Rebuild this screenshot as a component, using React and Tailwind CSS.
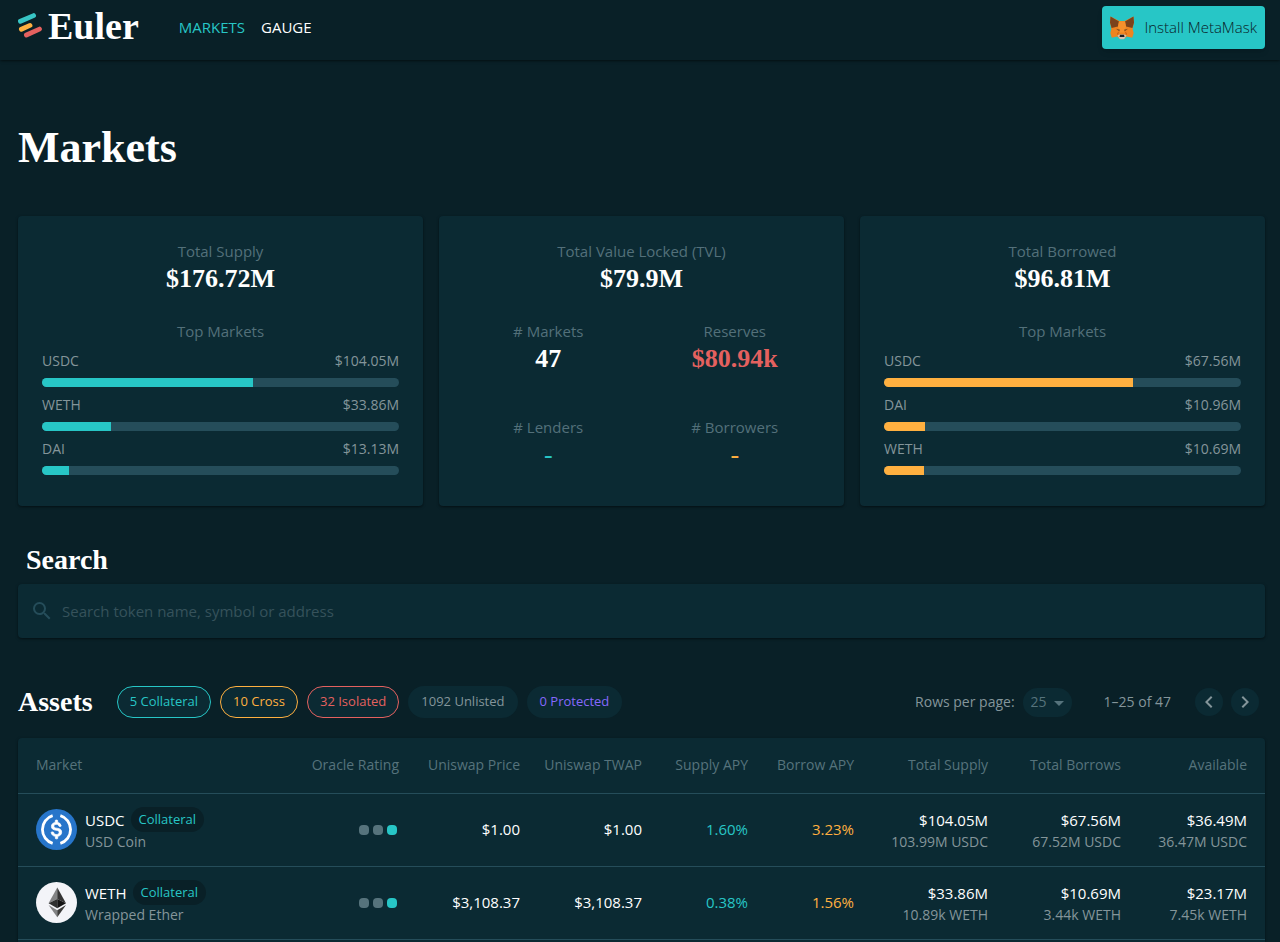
import React, { useState } from 'react';
import { MdSearch, MdArrowDropDown, MdChevronLeft, MdChevronRight } from 'react-icons/md';

const supplyMarkets = [
  { symbol: 'USDC', value: '$104.05M', percent: 59 },
  { symbol: 'WETH', value: '$33.86M', percent: 19.2 },
  { symbol: 'DAI', value: '$13.13M', percent: 7.5 }
];

const borrowMarkets = [
  { symbol: 'USDC', value: '$67.56M', percent: 69.8 },
  { symbol: 'DAI', value: '$10.96M', percent: 11.4 },
  { symbol: 'WETH', value: '$10.69M', percent: 11.1 }
];

const filters = [
  { label: '5 Collateral', style: 'text-[#27c6c6] border-[#27c6c6]' },
  { label: '10 Cross', style: 'text-[#ffb040] border-[#ffb040]' },
  { label: '32 Isolated', style: 'text-[#e4615f] border-[#e4615f]' },
  { label: '1092 Unlisted', style: 'text-[#84959a] border-transparent' },
  { label: '0 Protected', style: 'text-[#8668fc] border-transparent' }
];

const assets = [
  {
    symbol: 'USDC',
    name: 'USD Coin',
    price: '$1.00',
    twap: '$1.00',
    supplyApy: '1.60%',
    borrowApy: '3.23%',
    supply: ['$104.05M', '103.99M USDC'],
    borrows: ['$67.56M', '67.52M USDC'],
    available: ['$36.49M', '36.47M USDC']
  },
  {
    symbol: 'WETH',
    name: 'Wrapped Ether',
    price: '$3,108.37',
    twap: '$3,108.37',
    supplyApy: '0.38%',
    borrowApy: '1.56%',
    supply: ['$33.86M', '10.89k WETH'],
    borrows: ['$10.69M', '3.44k WETH'],
    available: ['$23.17M', '7.45k WETH']
  }
];

const Logo = () => (
  <svg viewBox="0 0 24 26" className="w-6 h-[26px]" fill="none" strokeLinecap="round" strokeWidth="4.8" aria-hidden="true">
    <path d="M2.4 8.2 15.6 2.6" stroke="#38c5c5" />
    <path d="M3.4 16.3 12 12.4" stroke="#ffb040" />
    <path d="M8.4 22 21.5 16.1" stroke="#e4615f" />
  </svg>
);

const Fox = () => (
  <svg viewBox="0 0 24 24" className="w-6 h-6" aria-hidden="true">
    <path d="M.5.5 9.5 5h5L23.5.5l.5 6-1.400 6.500 1.100 4-1.500 4.800-5.400-1.300L14 23h-4l-2.800-2.500-5.400 1.300L.3 17l1.100-4L0 6.500z" fill="#ee8420" />
    <path d="M.5.5 9 5.500 8 10.500 1.600 12 0 6.500zM23.500.5 15 5.500l1 5 6.400 1.500L24 6.500z" fill="#7b431c" />
    <path d="M9 5.500h6l1 5-1.800 6h-4.400l-1.800-6z" fill="#f6912c" />
    <path d="M6 12.800l4 1-.8 1.500zM18 12.800l-4 1 .8 1.500z" fill="#7a4a22" />
    <path d="M9.400 15.300l-2.400 2 .6 2.200zM14.600 15.300l2.400 2-.6 2.200z" fill="#cd6116" />
    <path d="M7.500 19.300l2.300-.8h4.400l2.300.8-1.900 3.200-.9.700h-3.400l-.9-.7z" fill="#d3c2b3" />
    <path d="M10 18.700h4l.5 2.300h-5z" fill="#1d2024" />
  </svg>
);

const UsdcIcon = () => (
  <svg viewBox="0 0 32 32" className="w-[41px] h-[41px] shrink-0" aria-hidden="true">
    <circle cx="16" cy="16" r="16" fill="#2775ca" />
    <path d="M20.022 18.124c0-2.124-1.280-2.852-3.840-3.156-1.828-.243-2.193-.728-2.193-1.578 0-.850.610-1.396 1.828-1.396 1.097 0 1.707.364 2.011 1.275a.458.458 0 00.427.303h.975a.416.416 0 00.427-.425v-.060a3.040 3.040 0 00-2.743-2.489V9.142c0-.243-.183-.425-.487-.486h-.915c-.243 0-.426.182-.487.486v1.396c-1.829.242-2.986 1.456-2.986 2.974 0 2.002 1.218 2.791 3.778 3.095 1.707.303 2.255.668 2.255 1.639 0 .970-.853 1.638-2.011 1.638-1.585 0-2.133-.667-2.316-1.578-.060-.242-.244-.364-.427-.364h-1.036a.416.416 0 00-.426.425v.060c.243 1.518 1.219 2.610 3.230 2.914v1.457c0 .242.183.425.487.485h.915c.243 0 .426-.182.487-.485V21.340c1.829-.303 3.047-1.578 3.047-3.217z" fill="#fff" stroke="#fff" strokeWidth=".6" />
    <path d="M13 5.200a11.300 11.300 0 0 0 0 21.600M19 5.200a11.300 11.300 0 0 1 0 21.600" fill="none" stroke="#fff" strokeWidth="2.200" />
  </svg>
);

const WethIcon = () => (
  <svg viewBox="0 0 32 32" className="w-[41px] h-[41px] shrink-0" aria-hidden="true">
    <circle cx="16" cy="16" r="16" fill="#f3f4f8" />
    <path d="M16.600 4.300v9l-6.800 3.200z" fill="#828384" />
    <path d="M16.600 4.300v9l6.800 3.200z" fill="#343434" />
    <path d="M9.800 16.500l6.800-3.200v7.200z" fill="#2f3030" />
    <path d="M16.600 13.300l6.800 3.200-6.800 4z" fill="#131313" />
    <path d="M9.800 18l6.800 4v5.600z" fill="#828384" />
    <path d="M23.400 18l-6.800 4v5.600z" fill="#3c3c3b" />
  </svg>
);

const Stat = ({ label, value, valueStyle = 'font-bold text-white' }) => (
  <div className="text-center">
    <p className="text-[15px] leading-6 text-[#53707a]">{label}</p>
    <p className={`font-['Liberation_Serif',serif] text-[26px] leading-8 ${valueStyle}`}>{value}</p>
  </div>
);

const MarketBars = ({ title, label, value, markets, fill }) => (
  <section className="bg-[#0b2a33] rounded shadow-sm shadow-black/40 px-6 pt-[23px] pb-[23px]">
    <Stat label={label} value={value} />
    <p className="mt-6 text-center text-[15px] leading-6 text-[#53707a]">{title}</p>
    <ul className="mt-2">
      {markets.map((market) => (
        <li key={market.symbol} className="h-11">
          <div className="flex justify-between text-sm leading-5 text-[#84959a]">
            <span>{market.symbol}</span>
            <span>{market.value}</span>
          </div>
          <div className="mt-[7px] h-[9px] rounded-full bg-[#254d5a] overflow-hidden">
            <div className={`h-full ${fill}`} style={{ width: `${market.percent}%` }} />
          </div>
        </li>
      ))}
    </ul>
  </section>
);

const Amount = ({ amount }) => (
  <>
    <div className="text-[15px] leading-6 font-medium text-white">{amount[0]}</div>
    <div className="text-sm leading-5 text-[#84959a]">{amount[1]}</div>
  </>
);

const AssetRow = ({ asset }) => (
  <tr className="h-[73px] border-t border-[#254d5a]">
    <td className="pl-[18px] text-left">
      <div className="flex items-center gap-2">
        {asset.symbol === 'USDC' ? <UsdcIcon /> : <WethIcon />}
        <div>
          <div className="flex items-center gap-[6px] text-[15px] leading-6 font-medium text-white">
            {asset.symbol}
            <span className="h-[25px] px-2 rounded-full bg-[#092027] text-[13px] leading-6 font-normal text-[#27c6c6]">Collateral</span>
          </div>
          <div className="text-sm leading-5 text-[#84959a]">{asset.name}</div>
        </div>
      </div>
    </td>
    <td>
      <div className="flex justify-end gap-1 pr-[2px]">
        <span className="w-[10px] h-[10px] rounded bg-[#56737c]" />
        <span className="w-[10px] h-[10px] rounded bg-[#56737c]" />
        <span className="w-[10px] h-[10px] rounded bg-[#27c6c6]" />
      </div>
    </td>
    <td className="text-[15px] font-medium text-white">{asset.price}</td>
    <td className="text-[15px] font-medium text-white">{asset.twap}</td>
    <td className="text-[15px] font-medium text-[#27c6c6]">{asset.supplyApy}</td>
    <td className="text-[15px] font-medium text-[#ffb040]">{asset.borrowApy}</td>
    <td><Amount amount={asset.supply} /></td>
    <td><Amount amount={asset.borrows} /></td>
    <td className="pr-[18px]"><Amount amount={asset.available} /></td>
  </tr>
);

const App = () => {
  const [search, setSearch] = useState('');
  const [rows, setRows] = useState('25');

  return (
    <div className="min-h-screen flex flex-col bg-[#092027] font-['Open_Sans',sans-serif] text-white">
      <header className="h-[60px] shrink-0 flex items-center pl-[18px] pr-[15px] shadow-sm shadow-black/40">
        <a href="#" className="flex items-center gap-[6px] pb-2">
          <Logo />
          <span className="font-['Liberation_Serif',serif] text-[38px] leading-10 font-bold">Euler</span>
        </a>
        <nav className="ml-10 pb-[6px] flex gap-4 text-[15px] leading-6 font-medium">
          <a href="#" className="text-[#27c6c6]">MARKETS</a>
          <a href="#">GAUGE</a>
        </nav>
        <button className="ml-auto mb-[5px] h-[43px] px-2 flex items-center gap-[10px] rounded bg-[#27c6c6] text-[15px] font-light text-[#092027] shadow-md">
          <Fox />
          Install MetaMask
        </button>
      </header>

      <main className="flex-1 flex flex-col pl-[18px] pr-[15px]">
        <h1 className="mt-[60px] font-['Liberation_Serif',serif] text-[44px] leading-[56px] font-bold">Markets</h1>

        <div className="mt-10 grid grid-cols-3 gap-4">
          <MarketBars title="Top Markets" label="Total Supply" value="$176.72M" markets={supplyMarkets} fill="bg-[#27c6c6]" />
          <section className="bg-[#0b2a33] rounded shadow-sm shadow-black/40 px-4 pt-[23px]">
            <Stat label="Total Value Locked (TVL)" value="$79.9M" />
            <div className="mt-6 grid grid-cols-2 gap-y-10">
              <Stat label="# Markets" value="47" />
              <Stat label="Reserves" value="$80.94k" valueStyle="font-bold text-[#e4615f]" />
              <Stat label="# Lenders" value="-" valueStyle="font-normal text-[#27c6c6]" />
              <Stat label="# Borrowers" value="-" valueStyle="font-normal text-[#ffb040]" />
            </div>
          </section>
          <MarketBars title="Top Markets" label="Total Borrowed" value="$96.81M" markets={borrowMarkets} fill="bg-[#ffb040]" />
        </div>

        <h2 className="mt-9 ml-2 font-['Liberation_Serif',serif] text-[28px] leading-9 font-bold">
          <label htmlFor="search">Search</label>
        </h2>
        <div className="mt-[6px] h-[54px] px-3 flex items-center gap-2 rounded bg-[#0b2a33] shadow-sm shadow-black/40">
          <MdSearch className="w-6 h-6 text-[#254d5a]" />
          <input
            id="search"
            type="text"
            value={search}
            onChange={(e) => setSearch(e.target.value)}
            placeholder="Search token name, symbol or address"
            className="flex-1 bg-transparent text-[15px] leading-6 outline-none placeholder:text-[#36525b]"
          />
        </div>

        <div className="mt-12 h-8 flex items-center">
          <h2 className="font-['Liberation_Serif',serif] text-[28px] leading-8 font-bold">Assets</h2>
          <div className="ml-6 flex gap-[9px]">
            {filters.map((filter) => (
              <button key={filter.label} className={`h-8 px-3 rounded-full border bg-[#0b2a33] text-[13px] ${filter.style}`}>
                {filter.label}
              </button>
            ))}
          </div>
          <div className="ml-auto pr-[6px] flex items-center text-sm text-[#84959a]">
            <label htmlFor="rows">Rows per page:</label>
            <div className="relative ml-2">
              <select
                id="rows"
                value={rows}
                onChange={(e) => setRows(e.target.value)}
                className="w-[49px] h-[29px] pl-2 appearance-none rounded-full bg-[#0b2a33] text-[#56737c]"
              >
                <option>25</option>
                <option>50</option>
                <option>100</option>
              </select>
              <MdArrowDropDown className="absolute right-[1px] top-[3px] w-6 h-6 text-[#56737c] pointer-events-none" />
            </div>
            <span className="ml-8">1–25 of 47</span>
            <button aria-label="Previous page" className="ml-6 w-7 h-7 flex items-center justify-center rounded-full bg-[#0b2a33]">
              <MdChevronLeft className="w-6 h-6" />
            </button>
            <button aria-label="Next page" className="ml-2 w-7 h-7 flex items-center justify-center rounded-full bg-[#0b2a33]">
              <MdChevronRight className="w-6 h-6" />
            </button>
          </div>
        </div>

        <div className="mt-5 flex-1 rounded-t bg-[#0b2a33] shadow-sm shadow-black/40">
          <table className="w-full table-fixed border-collapse text-right border-b border-[#254d5a]">
            <thead>
              <tr className="h-[55px] text-sm text-[#56737c]">
                <th className="pl-[18px] text-left font-normal">Market</th>
                <th className="w-[110px] font-normal">Oracle Rating</th>
                <th className="w-[121px] font-normal">Uniswap Price</th>
                <th className="w-[122px] font-normal">Uniswap TWAP</th>
                <th className="w-[106px] font-normal">Supply APY</th>
                <th className="w-[106px] font-normal">Borrow APY</th>
                <th className="w-[134px] font-normal">Total Supply</th>
                <th className="w-[133px] font-normal">Total Borrows</th>
                <th className="w-[144px] pr-[18px] font-normal">Available</th>
              </tr>
            </thead>
            <tbody>
              {assets.map((asset) => (
                <AssetRow key={asset.symbol} asset={asset} />
              ))}
            </tbody>
          </table>
        </div>
      </main>
    </div>
  );
};

export default App;
